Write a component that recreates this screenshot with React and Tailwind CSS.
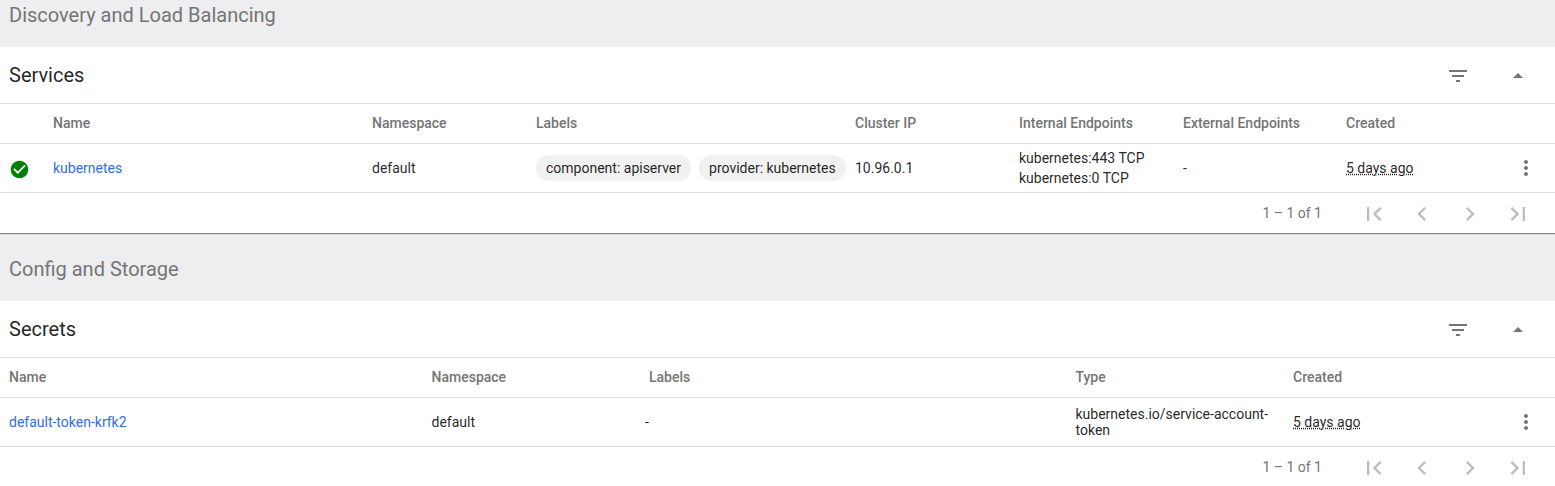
const paths = {
  filter: "M10 18h4v-2h-4v2zM3 6v2h18V6H3zm3 7h12v-2H6v2z",
  up: "M7 14l5-5 5 5z",
  more: "M12 8c1.1 0 2-.9 2-2s-.9-2-2-2-2 .9-2 2 .9 2 2 2zm0 2c-1.1 0-2 .9-2 2s.9 2 2 2 2-.9 2-2-.9-2-2-2zm0 6c-1.1 0-2 .9-2 2s.9 2 2 2 2-.9 2-2-.9-2-2-2z",
  first: "M18.41 16.59L13.82 12l4.59-4.59L17 6l-6 6 6 6zM6 6h2v12H6z",
  prev: "M15.41 7.41L14 6l-6 6 6 6 1.41-1.41L10.83 12z",
  next: "M10 6L8.59 7.41 13.17 12l-4.58 4.59L10 18l6-6z",
  last: "M5.59 7.41L10.18 12l-4.59 4.59L7 18l6-6-6-6zM16 6h2v12h-2z",
  check: "M12 2C6.48 2 2 6.48 2 12s4.48 10 10 10 10-4.48 10-10S17.52 2 12 2zm-2 15l-5-5 1.41-1.41L10 14.17l7.59-7.59L19 8l-9 9z",
};

function Icon({ name, className }) {
  return (
    <svg viewBox="0 0 24 24" fill="currentColor" className={className}>
      <path d={paths[name]} />
    </svg>
  );
}

function SectionTitle({ children, className }) {
  return <div className={"px-[9px] pb-[17px] text-[20px] leading-[30px] text-[#757575] " + className}>{children}</div>;
}

function CardHeader({ title }) {
  return (
    <div className="flex h-[57px] items-center justify-between border-b border-[#e0e0e0] pl-[9px] pr-[13px]">
      <h2 className="text-[20px] font-normal text-black/87">{title}</h2>
      <div className="mt-0.5 flex gap-3">
        <button className="flex h-10 w-12 items-center justify-center text-[#757575]"><Icon name="filter" className="h-6 w-6" /></button>
        <button className="flex h-10 w-12 items-center justify-center text-[#757575]"><Icon name="up" className="h-6 w-6" /></button>
      </div>
    </div>
  );
}

function Pagination() {
  return (
    <div className="flex h-10 items-center justify-end pr-[13px] text-[#757575]">
      <span className="mr-[28px] text-sm">1 – 1 of 1</span>
      {["first", "prev", "next", "last"].map((n) => (
        <button key={n} className="flex h-10 w-12 items-center justify-center pt-0.5 text-black/26"><Icon name={n} className="h-7 w-7" /></button>
      ))}
    </div>
  );
}

// created date + row menu, shared by both tables
function CreatedCell() {
  return (
    <div className="flex items-center justify-between pr-[17px]">
      <abbr className="text-sm underline decoration-dotted" title="5 days ago">5 days ago</abbr>
      <Icon name="more" className="h-6 w-6 text-[#757575]" />
    </div>
  );
}

function Chip({ children }) {
  return <span className="flex h-[26px] shrink-0 items-center rounded-full bg-[#f1f1f1] px-2.5">{children}</span>;
}

const serviceCols = "grid grid-cols-[53px_319px_164px_319px_164px_164px_163px_1fr] items-center";
const secretCols = "grid grid-cols-[9px_422.5px_217.5px_426.5px_217.5px_1fr] items-center";

export default function App() {
  return (
    <div className="h-[486px] overflow-hidden bg-[#edeef0] font-['Roboto',sans-serif] text-sm text-black/87">
      <SectionTitle>Discovery and Load Balancing</SectionTitle>
      <section className="bg-white shadow-[0_1px_1px_rgba(0,0,0,0.45)]">
        <CardHeader title="Services" />
        <div className={serviceCols + " h-10 border-b border-[#e0e0e0] pb-0.5 font-medium text-[#757575]"}>
          <span />
          <span>Name</span>
          <span>Namespace</span>
          <span>Labels</span>
          <span>Cluster IP</span>
          <span>Internal Endpoints</span>
          <span>External Endpoints</span>
          <span>Created</span>
        </div>
        <div className={serviceCols + " h-[49px] border-b border-[#e0e0e0]"}>
          <span className="relative ml-[9px] mt-0.5 h-[21px] w-[21px]">
            <span className="absolute inset-1 bg-white" />
            <Icon name="check" className="relative h-[21px] w-[21px] text-[#008000]" />
          </span>
          <a className="text-[#326de6]">kubernetes</a>
          <span>default</span>
          <div className="flex gap-2 whitespace-nowrap">
            <Chip>component: apiserver</Chip>
            <Chip>provider: kubernetes</Chip>
          </div>
          <span>10.96.0.1</span>
          <div className="leading-5">
            <div>kubernetes:443 TCP</div>
            <div>kubernetes:0 TCP</div>
          </div>
          <span>-</span>
          <CreatedCell />
        </div>
        <Pagination />
      </section>

      <SectionTitle className="pt-[21px]">Config and Storage</SectionTitle>
      <section className="bg-white">
        <CardHeader title="Secrets" />
        <div className={secretCols + " h-10 border-b border-[#e0e0e0] pb-0.5 font-medium text-[#757575]"}>
          <span />
          <span>Name</span>
          <span>Namespace</span>
          <span>Labels</span>
          <span>Type</span>
          <span>Created</span>
        </div>
        <div className={secretCols + " h-[49px] border-b border-[#e0e0e0]"}>
          <span />
          <a className="text-[#326de6]">default-token-krfk2</a>
          <span>default</span>
          <span className="-ml-1">-</span>
          <span className="w-[200px] leading-4">kubernetes.io/service-account-token</span>
          <CreatedCell />
        </div>
        <Pagination />
      </section>
    </div>
  );
}
